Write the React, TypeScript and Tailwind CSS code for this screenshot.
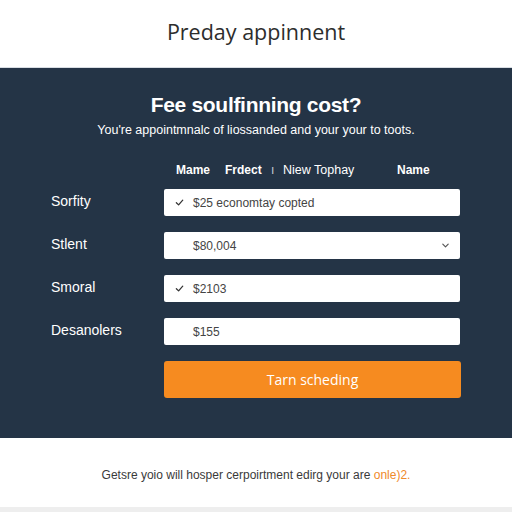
import React from "react";

function Check() {
  return (
    <svg width="9" height="9" viewBox="0 0 10 10" className="shrink-0">
      <path d="M1.5 5.2 L4 7.6 L8.6 2.4" fill="none" stroke="#333" strokeWidth="1.4" strokeLinecap="round" strokeLinejoin="round" />
    </svg>
  );
}

function Chevron() {
  return (
    <svg width="9" height="9" viewBox="0 0 10 10" className="shrink-0">
      <path d="M2 3.5 L5 6.5 L8 3.5" fill="none" stroke="#555" strokeWidth="1.3" strokeLinecap="round" strokeLinejoin="round" />
    </svg>
  );
}

const rows = [
  { label: "Sorfity", value: "$25 economtay copted", check: true, chevron: false },
  { label: "Stlent", value: "$80,004", check: false, chevron: true },
  { label: "Smoral", value: "$2103", check: true, chevron: false },
  { label: "Desanolers", value: "$155", check: false, chevron: false },
];

const arial = { fontFamily: '"Liberation Sans", Arial, sans-serif' };

export default function App() {
  return (
    <div className="w-[512px] h-[512px] flex flex-col bg-white overflow-hidden" style={{ fontFamily: '"Open Sans", "Noto Sans", sans-serif' }}>
      <header className="h-[68px] flex items-center justify-center border-b border-[#d8dde3]">
        <h1 className="text-[21.5px] text-[#2d2d2d] leading-none -mt-[4px]">Preday appinnent</h1>
      </header>
      <section className="h-[370px] bg-[#243446] flex flex-col" style={arial}>
        <h2 className="mt-[23px] text-center text-white font-bold text-[21px] leading-[28px] tracking-[-0.3px]">
          Fee soulfinning cost?
        </h2>
        <p className="mt-[3px] text-center text-white text-[12.5px] leading-[16px]">You're appointmnalc of liossanded and your your to toots.</p>
        <div className="mt-[24px] ml-[176px] flex items-center text-white font-bold text-[12px] leading-[16px]">
          <span className="w-[49px]">Mame</span>
          <span className="w-[46px]">Frdect</span>
          <span className="w-[12px] text-[#c8ced6] font-normal">ı</span>
          <span className="w-[114px] font-normal text-[12.5px]">Niew Tophay</span>
          <span>Name</span>
        </div>
        <div className="mt-[11px] flex flex-col gap-[16px] pl-[51px]">
          {rows.map((r) => (
            <div key={r.label} className="flex items-center">
              <div className="w-[113px] text-white text-[14px] leading-[18px] -mt-[4px]">{r.label}</div>
              <div className="w-[296px] h-[27px] bg-white rounded-[2px] flex items-center pl-[11px] pr-[10px] text-[12px] text-[#444]">
                <div className="w-[18px]">{r.check ? <Check /> : null}</div>
                <span className="flex-1">{r.value}</span>
                {r.chevron ? <Chevron /> : null}
              </div>
            </div>
          ))}
          <div className="flex">
            <div className="w-[113px]" />
            <button className="w-[297px] h-[37px] bg-[#f68b20] rounded-[3px] text-white text-[14px] flex items-center justify-center" style={{ fontFamily: '"Open Sans", sans-serif' }}>
              Tarn scheding
            </button>
          </div>
        </div>
      </section>
      <footer className="flex-1 flex flex-col">
        <div className="flex-1 flex items-center justify-center pt-[4px]">
          <p className="text-[12px] text-[#3a3a3a]" style={arial}>
            Getsre yoio will hosper cerpoirtment edirg your are <span className="text-[#ef8a2a]">onle)2.</span>
          </p>
        </div>
        <div className="h-[5px] bg-[#eeeeee]" />
      </footer>
    </div>
  );
}
